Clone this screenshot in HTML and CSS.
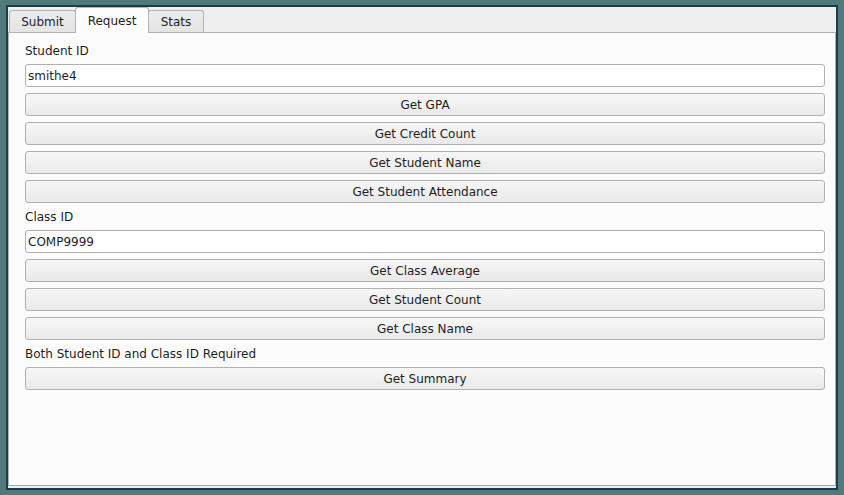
FILE: index.html
```html
<!DOCTYPE html>
<html>
<head>
<meta charset="utf-8">
<link rel="stylesheet" href="styles.css">
</head>
<body>
<div class="frame">
  <div class="window">
    <div class="tabbar">
      <div class="tab first">Submit</div>
      <div class="tab active">Request</div>
      <div class="tab">Stats</div>
    </div>
    <div class="pane">
      <div class="form">
        <div class="label">Student ID</div>
        <div class="input">smithe4</div>
        <div class="btn">Get GPA</div>
        <div class="btn">Get Credit Count</div>
        <div class="btn">Get Student Name</div>
        <div class="btn">Get Student Attendance</div>
        <div class="label">Class ID</div>
        <div class="input">COMP9999</div>
        <div class="btn">Get Class Average</div>
        <div class="btn">Get Student Count</div>
        <div class="btn">Get Class Name</div>
        <div class="label">Both Student ID and Class ID Required</div>
        <div class="btn">Get Summary</div>
      </div>
    </div>
  </div>
</div>
</body>
</html>
```

FILE: styles.css
```css
html, body {
  margin: 0;
  padding: 0;
  background: #527a7b;
  width: 844px;
  height: 495px;
  overflow: hidden;
  font-family: "DejaVu Sans", sans-serif;
  font-size: 12px;
  color: #1e1e1e;
}
.frame {
  margin: 5px 6px 0 6px;
  width: 828px;
  height: 481px;
  border: 2px solid #173d4e;
  background: #efefef;
}
.window {
  display: flex;
  flex-direction: column;
  height: 100%;
}
.tabbar {
  display: flex;
  height: 25px;
  align-items: flex-end;
  padding-left: 1px;
  position: relative;
  z-index: 1;
}
.tab {
  box-sizing: border-box;
  height: 22px;
  padding: 1px 11px 0 11px;
  line-height: 21px;
  border: 1px solid #b3b3b3;
  border-bottom: none;
  border-radius: 3px 3px 0 0;
  background: linear-gradient(#ececec, #e4e4e4);
  margin-left: -1px;
  margin-bottom: 0;
}
.tab.first {
  margin-left: 0;
  width: 67px;
  text-align: center;
  padding: 1px 0 0 0;
}
.tab.active {
  height: 26px;
  margin-bottom: -1px;
  background: #fcfcfc;
  width: 74px;
  text-align: center;
  padding: 1px 0 0 0;
  line-height: 24px;
  border-color: #b3b3b3;
}
.tab:last-child {
  width: 56px;
  text-align: center;
  padding: 1px 0 0 0;
}
.pane {
  flex: 1;
  background: #fcfcfc;
  border: 1px solid #b3b3b3;
  border-bottom: 1px solid #a9a9a9;
  margin-bottom: 2px;
}
.form {
  display: flex;
  flex-direction: column;
  gap: 6px;
  padding: 10px 10px 0 16px;
}
.label {
  box-sizing: border-box;
  height: 15px;
  line-height: 15px;
  padding-top: 1px;
}
.input {
  box-sizing: border-box;
  height: 23px;
  line-height: 21px;
  padding-top: 1px;
  border: 1px solid #b0b0b0;
  border-radius: 3px;
  background: #ffffff;
  padding-left: 2px;
}
.btn {
  box-sizing: border-box;
  height: 23px;
  line-height: 21px;
  padding-top: 1px;
  text-align: center;
  border: 1px solid #b0b0b0;
  border-radius: 3px;
  background: linear-gradient(#f7f7f7, #e9e9e9);
}
```
